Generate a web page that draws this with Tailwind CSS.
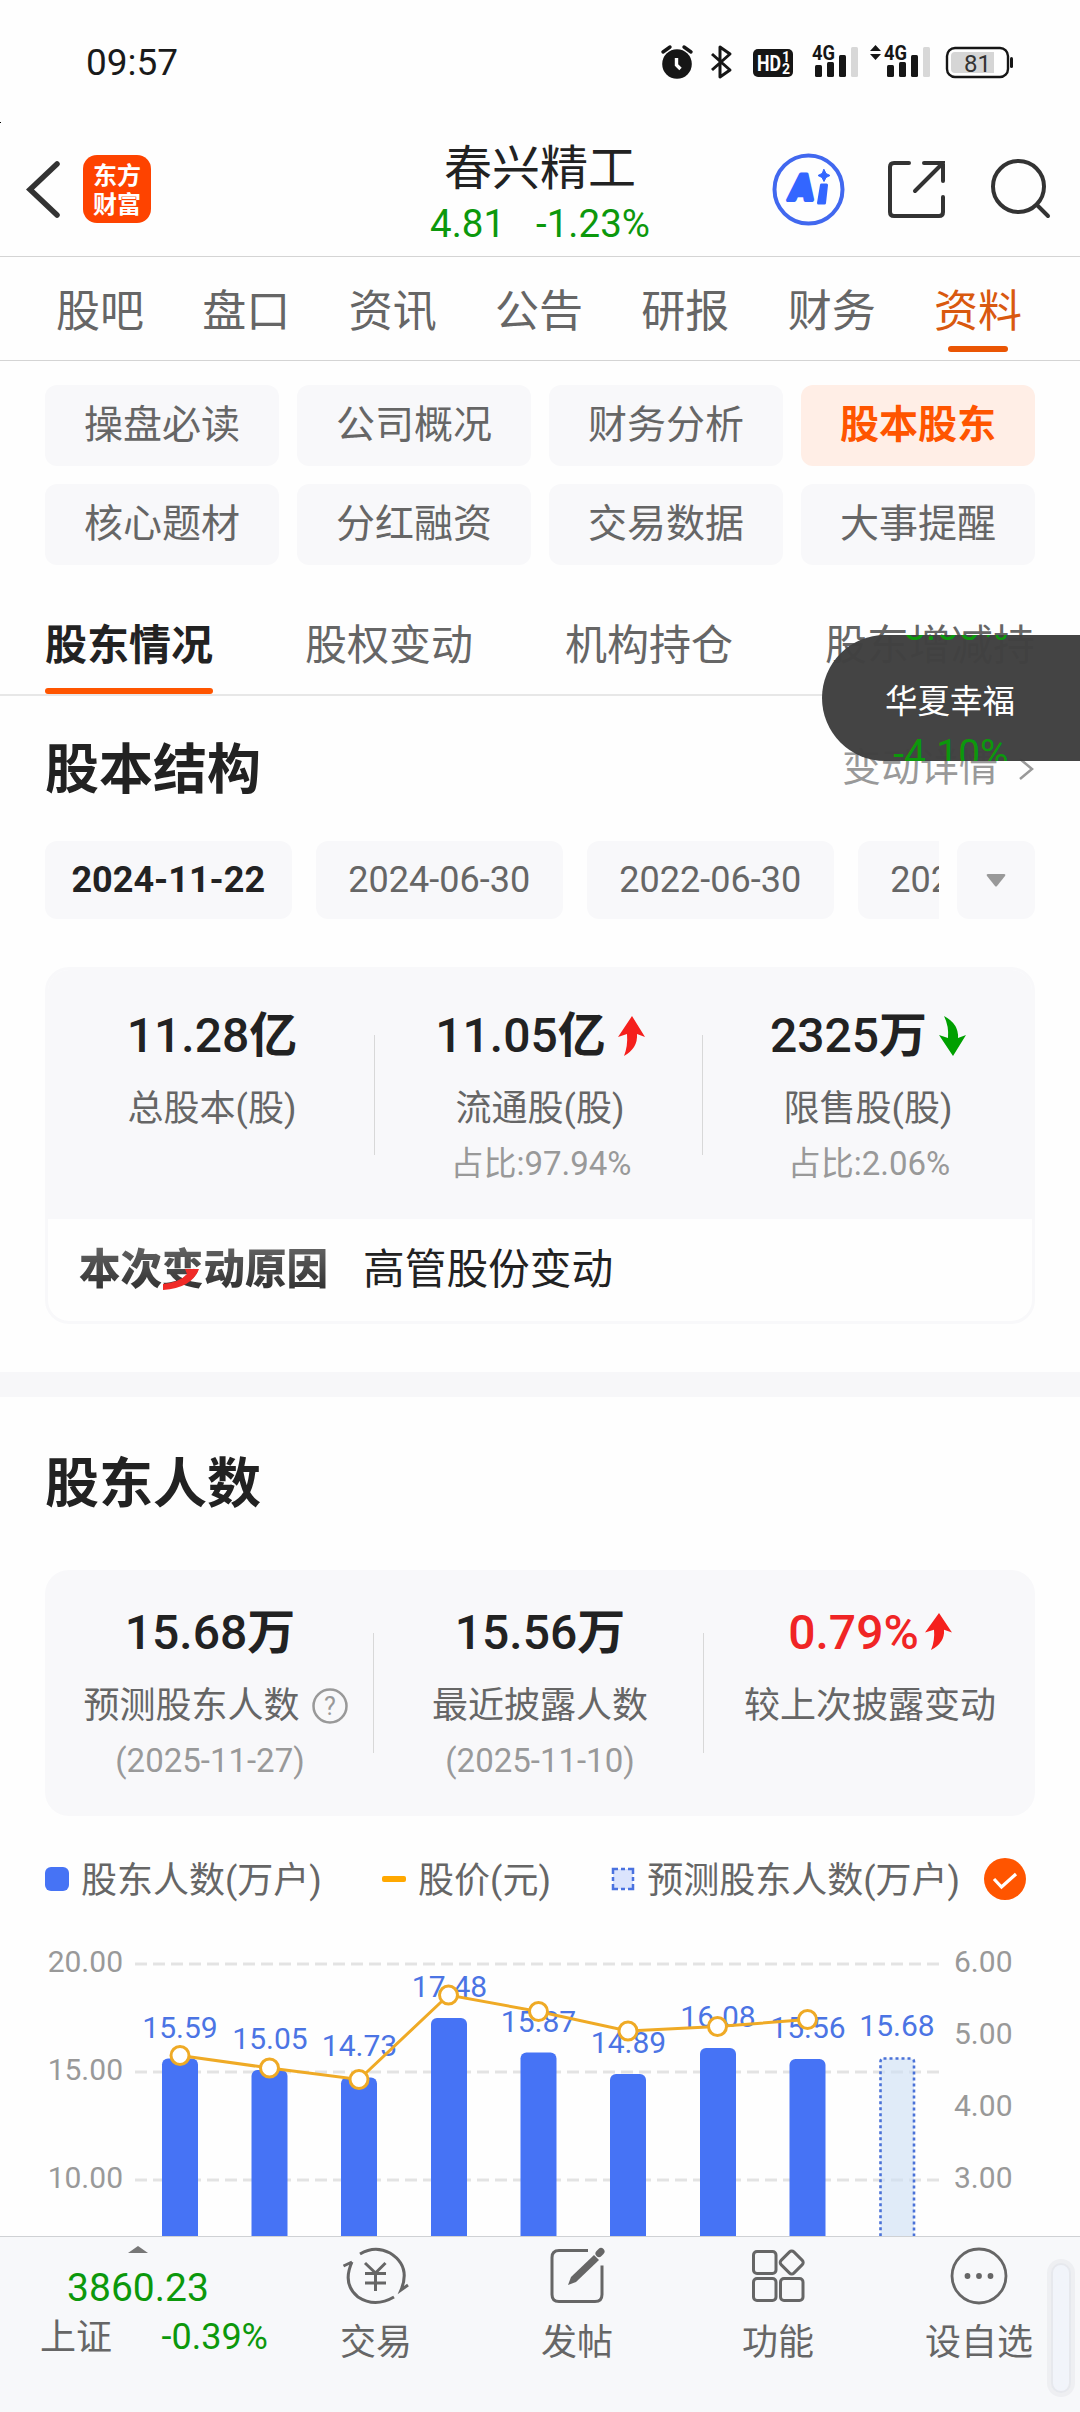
<!DOCTYPE html>
<html lang="zh-CN">
<head>
<meta charset="utf-8">
<title>春兴精工</title>
<script src="https://cdn.jsdelivr.net/npm/@tailwindcss/browser@4"></script>
</head>
<body class="bg-white font-[Roboto,'Noto_Sans_CJK_SC',sans-serif] text-[#666] leading-none">
<div class="relative w-[1080px] h-[2412px] overflow-hidden flex flex-col bg-[#fefefe]">

  <!-- status bar -->
  <div class="h-[124px] shrink-0 flex items-start justify-between pl-[86px] pr-[65px] pt-[40px]">
    <div class="text-[37px] leading-[46px] text-[#1a1a1a]">09:57</div>
    <svg class="w-[360px] h-[46px]" viewBox="655 40 360 46" fill="#161616">
      <circle cx="677" cy="64" r="14.8"/>
      <path d="M663 52l7-5M691 52l-7-5" stroke="#161616" stroke-width="3.4" stroke-linecap="round"/>
      <path d="M676.5 58v7l4 4" stroke="#fff" stroke-width="3.4" fill="none"/>
      <path d="M712 54l18 16-10 7V47l10 7-18 16" fill="none" stroke="#161616" stroke-width="3" stroke-linejoin="round"/>
      <rect x="753" y="49" width="40" height="28" rx="5"/>
      <text x="757" y="71" font-size="22" font-weight="700" fill="#fff" textLength="24" lengthAdjust="spacingAndGlyphs">HD</text>
      <text x="782" y="62" font-size="14" font-weight="700" fill="#fff">1</text>
      <text x="782" y="74" font-size="14" font-weight="700" fill="#fff">2</text>
      <text x="812" y="60" font-size="21" font-weight="700" textLength="23" lengthAdjust="spacingAndGlyphs">4G</text>
      <rect x="815" y="65" width="7" height="12" rx="1.5"/><rect x="827" y="62" width="7" height="15" rx="1.5"/><rect x="839" y="55" width="7" height="22" rx="1.5"/><rect x="851" y="47" width="7" height="30" rx="1.5" fill="#d8d8d8"/>
      <path d="M870 51l5.500-6 5.500 6zM870 54h11l-5.500 6z"/>
      <text x="884" y="60" font-size="21" font-weight="700" textLength="23" lengthAdjust="spacingAndGlyphs">4G</text>
      <rect x="887" y="65" width="7" height="12" rx="1.5"/><rect x="899" y="62" width="7" height="15" rx="1.5"/><rect x="911" y="55" width="7" height="22" rx="1.5"/><rect x="923" y="47" width="7" height="30" rx="1.5" fill="#d8d8d8"/>
      <rect x="947" y="48" width="61" height="29" rx="8" fill="#fff" stroke="#161616" stroke-width="2.4"/>
      <path d="M955 52h39v21h-39q-4 0-4-4v-13q0-4 4-4z" fill="#d6d6d6"/>
      <rect x="1010" y="57" width="3" height="11" rx="1.500"/>
      <text x="977.500" y="71.500" font-size="24" text-anchor="middle" fill="#333">81</text>
    </svg>
  </div>

  <!-- title bar -->
  <div class="h-[133px] shrink-0 grid grid-cols-[1fr_auto_1fr] border-b border-[#d4d4d4]">
    <div class="flex items-start pl-[26px] pt-[31px]">
      <svg class="w-[34px] h-[68px]" viewBox="26 155 34 68" fill="none" stroke="#333" stroke-width="5.500"><path d="M57 164L30 189.500l27 25.500" stroke-linecap="round"/></svg>
      <div class="ml-[23px] w-[68px] h-[68px] rounded-[14px] bg-[#fe4300] text-white font-bold text-[24px] leading-[29px] text-center pt-[7px]">东方<br>财富</div>
    </div>
    <div class="flex flex-col items-center">
      <div class="text-[48px] leading-[56px] mt-[17px] text-[#222]">春兴精工</div>
      <div class="text-[38.500px] leading-[44px] mt-[5px] text-[#0c980c] flex gap-[31px]"><span>4.81</span><span>-1.23%</span></div>
    </div>
    <div class="flex justify-end pr-[26px] pt-[28px]">
      <svg class="w-[284px] h-[76px]" viewBox="770 152 284 76" fill="none" stroke="#333" stroke-width="4" stroke-linecap="round">
        <circle cx="808.500" cy="189.500" r="34" stroke="#4168ef"/>
        <g fill="#3366ff" stroke="#3366ff" stroke-width="4" stroke-linejoin="round" font-weight="900">
          <text transform="translate(788 200) skewX(-8)" font-size="36" textLength="24" lengthAdjust="spacingAndGlyphs">A</text>
          <path d="M821.500 185h5l-2 18h-6z" stroke-width="3"/>
          <path d="M824 169.500l2 4 4 2-4 2-2 4-2-4-4-2 4-2z" stroke-width="1"/>
        </g>
        <path d="M909 163h-15q-4 0-4 4v45q0 4 4 4h45q4 0 4-4v-15M924 163h19v18M943 163l-28 28"/>
        <circle cx="1018.500" cy="186.500" r="25.500"/><path d="M1037 205l11 11"/>
      </svg>
    </div>
  </div>

  <!-- main tabs -->
  <div class="h-[104px] shrink-0 flex justify-between pl-[56px] pr-[58px] border-b border-[#d4d4d4] text-[44px]">
    <div class="pt-[33px]">股吧</div><div class="pt-[33px]">盘口</div><div class="pt-[33px]">资讯</div><div class="pt-[33px]">公告</div><div class="pt-[33px]">研报</div><div class="pt-[33px]">财务</div>
    <div class="pt-[33px] text-[#d9590f] flex flex-col items-center">资料<span class="mt-[12px] w-[60px] h-[6px] rounded-full bg-[#ea5504]"></span></div>
  </div>

  <!-- sub categories -->
  <div class="mt-[24px] mx-[45px] grid grid-cols-4 gap-[18px] text-[39px]">
    <div class="h-[81px] rounded-xl bg-[#f8f8fa] flex items-center justify-center">操盘必读</div>
    <div class="h-[81px] rounded-xl bg-[#f8f8fa] flex items-center justify-center">公司概况</div>
    <div class="h-[81px] rounded-xl bg-[#f8f8fa] flex items-center justify-center">财务分析</div>
    <div class="h-[81px] rounded-xl bg-[#ffeee6] text-[#ff5500] font-bold flex items-center justify-center">股本股东</div>
    <div class="h-[81px] rounded-xl bg-[#f8f8fa] flex items-center justify-center">核心题材</div>
    <div class="h-[81px] rounded-xl bg-[#f8f8fa] flex items-center justify-center">分红融资</div>
    <div class="h-[81px] rounded-xl bg-[#f8f8fa] flex items-center justify-center">交易数据</div>
    <div class="h-[81px] rounded-xl bg-[#f8f8fa] flex items-center justify-center">大事提醒</div>
  </div>

  <!-- section tabs -->
  <div class="h-[131px] shrink-0 flex gap-[92px] px-[45px] pt-[60px] border-b-2 border-[#e7e7e7] text-[42px] whitespace-nowrap">
    <div class="text-[#222] font-bold flex flex-col">股东情况<span class="mt-[21px] h-[6px] rounded-full bg-[#ff5500]"></span></div>
    <div>股权变动</div><div>机构持仓</div><div>股东增减持</div>
  </div>

  <!-- share structure -->
  <div class="h-[145px] shrink-0 px-[45px] flex items-center justify-between">
    <h2 class="text-[54px] font-bold text-[#222] pt-[4px]">股本结构</h2>
    <div class="flex items-center text-[39px] text-[#999]">变动详情<svg class="ml-[19px] w-[18px] h-[24px]" viewBox="0 0 18 24" fill="none" stroke="#999" stroke-width="2.500"><path d="M3 2l12 10L3 22"/></svg></div>
  </div>
  <div class="h-[78px] shrink-0 mx-[45px] flex gap-[18px] text-[36px]">
    <div class="flex-1 flex gap-[24.500px] overflow-hidden">
      <div class="w-[246.500px] shrink-0 rounded-xl bg-[#f8f8fa] text-[#222] font-bold flex items-center justify-center">2024-11-22</div>
      <div class="w-[246.500px] shrink-0 rounded-xl bg-[#f8f8fa] flex items-center justify-center">2024-06-30</div>
      <div class="w-[246.500px] shrink-0 rounded-xl bg-[#f8f8fa] flex items-center justify-center">2022-06-30</div>
      <div class="w-[246.500px] shrink-0 rounded-xl bg-[#f8f8fa] flex items-center justify-center">2021-12-31</div>
    </div>
    <div class="w-[78px] rounded-xl bg-[#f8f8fa] flex items-center justify-center"><svg class="w-[20px] h-[13px]" viewBox="0 0 20 13" fill="#999"><path d="M2 0h16q2 0 1 2l-8 10q-1 1-2 0L1 2Q0 0 2 0z"/></svg></div>
  </div>

  <div class="mt-[48px] mx-[45px] h-[357px] shrink-0 rounded-[24px] border-[3px] border-[#f8f8fa] overflow-hidden flex flex-col">
    <div class="h-[249px] bg-[#f8f8fa] grid grid-cols-3 text-center relative">
      <div class="pt-[42px]">
        <div class="text-[48px] font-medium text-[#222]">11.28<b>亿</b></div>
        <div class="mt-[31px] text-[36px]">总股本(股)</div>
      </div>
      <div class="pt-[42px]">
        <div class="text-[48px] font-medium text-[#222] flex justify-center items-center">11.05<b>亿</b><svg class="ml-[12px] w-[27px] h-[40px]" viewBox="0 0 27 40" fill="#f5201d"><path d="M14 0l13 21-8-3q1 14-13 22 4-10 3-22l-9 3z"/></svg></div>
        <div class="mt-[31px] text-[36px]">流通股(股)</div>
        <div class="mt-[20px] text-[33px] text-[#999] pl-[2px]">占比:97.94%</div>
      </div>
      <div class="pt-[42px]">
        <div class="text-[48px] font-medium text-[#222] flex justify-center items-center">2325<b>万</b><svg class="ml-[12px] w-[27px] h-[40px]" viewBox="0 0 27 40" fill="#00a000"><path d="M14 40L27 19l-8 3Q20 8 5 0q5 10 4 22l-9-3z"/></svg></div>
        <div class="mt-[31px] text-[36px]">限售股(股)</div>
        <div class="mt-[20px] text-[33px] text-[#999] pl-[2px]">占比:2.06%</div>
      </div>
      <div class="absolute left-[326px] top-[65px] w-px h-[120px] bg-[#d8d8d8]"></div>
      <div class="absolute left-[654px] top-[65px] w-px h-[120px] bg-[#d8d8d8]"></div>
    </div>
    <div class="flex-1 flex items-center pl-[31px] text-[42px] text-[#222]">
      <div class="relative font-black text-[41.500px] leading-[50px] bg-linear-to-b from-[#666] to-[#2c2c2c] bg-clip-text text-transparent">本次变动原因
        <svg class="absolute left-[84px] top-[24px] w-[36px] h-[21px]" viewBox="0 0 36 21" fill="#f02a27"><path d="M22 0h14Q29 19 0 21v-6Q17 13 24 5z"/></svg>
      </div>
      <div class="ml-[35px] text-[41.700px]">高管股份变动</div>
    </div>
  </div>
  <div class="mt-[48px] h-[25px] shrink-0 bg-[#f7f7f9]"></div>

  <!-- holder count -->
  <div class="h-[173px] shrink-0 px-[45px] flex items-center"><h2 class="text-[54px] font-bold text-[#222] pt-[3px]">股东人数</h2></div>
  <div class="relative mx-[45px] h-[246px] shrink-0 rounded-[24px] bg-[#f8f8fa] grid grid-cols-3 text-center">
    <div class="pt-[39px]">
      <div class="text-[48px] font-medium text-[#222]">15.68<b>万</b></div>
      <div class="mt-[31px] text-[36px] flex items-center justify-center pl-[11px]">预测股东人数<svg class="ml-[12px] w-[36px] h-[36px]" viewBox="0 0 36 36"><circle cx="18" cy="18" r="16.500" fill="none" stroke="#999" stroke-width="2.500"/><text x="18" y="27" font-size="25" text-anchor="middle" fill="#999">?</text></svg></div>
      <div class="mt-[20px] text-[33px] text-[#999]">(2025-11-27)</div>
    </div>
    <div class="pt-[39px]">
      <div class="text-[48px] font-medium text-[#222]">15.56<b>万</b></div>
      <div class="mt-[31px] text-[36px]">最近披露人数</div>
      <div class="mt-[20px] text-[33px] text-[#999]">(2025-11-10)</div>
    </div>
    <div class="pt-[39px]">
      <div class="text-[48px] font-medium text-[#f02525] flex items-center justify-center">0.79%<svg class="ml-[6px] mb-[3px] w-[27px] h-[37px]" viewBox="0 0 27 40" preserveAspectRatio="none" fill="#f5201d"><path d="M14 0l13 21-8-3q1 14-13 22 4-10 3-22l-9 3z"/></svg></div>
      <div class="mt-[31px] text-[36px]">较上次披露变动</div>
    </div>
    <div class="absolute left-[328px] top-[63px] w-px h-[120px] bg-[#d8d8d8]"></div>
    <div class="absolute left-[658px] top-[63px] w-px h-[120px] bg-[#d8d8d8]"></div>
  </div>

  <!-- legend -->
  <div class="h-[126px] shrink-0 pl-[45px] pr-[54px] flex items-center justify-between text-[36px]">
    <div class="flex items-center gap-[12px]"><span class="w-[24px] h-[24px] rounded-[6px] bg-[#4673f5]"></span><span class="pt-[4px]">股东人数(万户)</span></div>
    <div class="flex items-center gap-[12px]"><span class="w-[24px] h-[6px] rounded-[2px] bg-[#ffa800]"></span><span class="pt-[4px]">股价(元)</span></div>
    <div class="flex items-center gap-[12px]"><svg class="w-[24px] h-[24px]" viewBox="0 0 24 24"><path d="M2 2h20v20H2z" fill="#dbe4fd"/><path d="M2 7V2h5M17 2h5v5M22 17v5h-5M7 22H2v-5M10 2h4M10 22h4M2 10v4M22 10v4" fill="none" stroke="#4a72e0" stroke-width="2.500"/></svg><span class="pt-[4px]">预测股东人数(万户)</span>
      <svg class="ml-[12px] w-[42px] h-[42px]" viewBox="0 0 42 42"><circle cx="21" cy="21" r="21" fill="#ff5500"/><path d="M10 21l7.500 8L32 16" fill="none" stroke="#fff" stroke-width="3.200"/></svg></div>
  </div>

  <!-- chart -->
  <svg class="w-[1080px] h-[294px] shrink-0" viewBox="0 1942 1080 294" font-size="30">
    <path d="M135 1964H940M135 2072H940M135 2180H940" stroke="#e3e3e3" stroke-width="3" stroke-dasharray="12 6"/>
    <g fill="#999" text-anchor="end"><text x="123" y="1972">20.00</text><text x="123" y="2080">15.00</text><text x="123" y="2188">10.00</text></g>
    <g fill="#999"><text x="954" y="1972">6.00</text><text x="954" y="2044">5.00</text><text x="954" y="2116">4.00</text><text x="954" y="2188">3.00</text></g>
    <g fill="#4673f5">
      <rect x="162" y="2058.500" width="36" height="200" rx="6"/><rect x="251.500" y="2070" width="36" height="200" rx="6"/><rect x="341" y="2077.500" width="36" height="200" rx="6"/>
      <rect x="431" y="2018" width="36" height="240" rx="6"/><rect x="520.500" y="2052.500" width="36" height="200" rx="6"/><rect x="610" y="2074" width="36" height="200" rx="6"/>
      <rect x="700" y="2048" width="36" height="200" rx="6"/><rect x="789.500" y="2059" width="36" height="200" rx="6"/>
    </g>
    <rect x="880.500" y="2058.500" width="33.500" height="200" rx="3" fill="#cfe0f5" fill-opacity=".65" stroke="#4a72d8" stroke-width="2.600" stroke-dasharray="3 3"/>
    <g fill="#4b74e4" text-anchor="middle">
      <text x="180" y="2038">15.59</text><text x="270" y="2049">15.05</text><text x="359.500" y="2056">14.73</text><text x="449.500" y="1997">17.48</text><text x="538.500" y="2032">15.87</text><text x="628.500" y="2053">14.89</text><text x="718" y="2027">16.08</text><text x="808" y="2038">15.56</text><text x="897" y="2036">15.68</text>
    </g>
    <g fill="#fff" stroke="#efaa25" stroke-width="3">
      <polyline fill="none" points="180,2055.500 269.500,2068 359,2079.500 448.500,1995 538.500,2011.500 628,2031 717.500,2026.500 807.500,2019.500"/>
      <circle cx="180" cy="2055.500" r="9"/><circle cx="269.500" cy="2068" r="9"/><circle cx="359" cy="2079.500" r="9"/><circle cx="448.500" cy="1995" r="9"/><circle cx="538.500" cy="2011.500" r="9"/><circle cx="628" cy="2031" r="9"/><circle cx="717.500" cy="2026.500" r="9"/><circle cx="807.500" cy="2019.500" r="9"/>
    </g>
  </svg>

  <!-- bottom bar -->
  <div class="relative h-[176px] shrink-0 border-t border-[#cfd1d4] bg-[#f7f8fa] flex text-[36px]">
    <div class="w-[276px] flex flex-col items-center pt-[9px] text-[#0c980c]">
      <svg class="w-[20px] h-[7px]" viewBox="0 0 20 7" fill="#777"><path d="M0 7l10-7 10 7z"/></svg>
      <div class="mt-[16px] text-[39px]">3860.23</div>
      <div class="mt-[11px] w-full flex justify-between pl-[40px] pr-[8px]"><span class="text-[#666] pt-[1px]">上证</span><span>-0.39%</span></div>
    </div>
    <div class="w-[200px] flex flex-col items-center pt-[7px]">
      <svg class="w-[68px] h-[64px]" viewBox="342 2244 68 64" fill="none" stroke="#666" stroke-width="3">
        <path d="M360 2254Q375 2245 390 2253Q411 2266 401 2290L408 2285M352 2262L343.500 2266M352 2262Q342 2284 358 2297Q375 2308 394 2297M365 2263l10.500 10 10-10M365 2273.500h21M365 2283h21M375.500 2273v18"/>
      </svg>
      <div class="mt-[17px]">交易</div>
    </div>
    <div class="w-[202px] flex flex-col items-center pt-[7px]">
      <svg class="w-[64px] h-[64px]" viewBox="545 2244 64 64" fill="none" stroke="#666" stroke-width="3">
        <path d="M588 2250.500h-29q-7 0-7 7v37q0 7 7 7h36q7 0 7-7v-29"/>
        <path d="M568 2285l3-8 23-22 5 5-23 22z" fill="#666" stroke="none"/><path d="M599 2253.500l2-2" stroke-width="7" stroke-linecap="round"/>
      </svg>
      <div class="mt-[17px]">发帖</div>
    </div>
    <div class="w-[200px] flex flex-col items-center pt-[7px]">
      <svg class="w-[64px] h-[64px]" viewBox="746 2244 64 64" fill="none" stroke="#666" stroke-width="3">
        <rect x="753.500" y="2251.500" width="22.500" height="22" rx="3.500"/><rect x="753.500" y="2278.500" width="22.500" height="22" rx="3.500"/><rect x="780.500" y="2278.500" width="22.500" height="22" rx="3.500"/>
        <rect x="782.700" y="2253.500" width="18" height="18" rx="3" transform="rotate(45 791.700 2262.500)"/>
      </svg>
      <div class="mt-[17px]">功能</div>
    </div>
    <div class="w-[202px] flex flex-col items-center pt-[7px]">
      <svg class="w-[64px] h-[64px]" viewBox="0 0 64 64" fill="#666"><circle cx="32" cy="32" r="27" fill="none" stroke="#666" stroke-width="2.800"/><circle cx="20.500" cy="32" r="2.900"/><circle cx="32" cy="32" r="2.900"/><circle cx="43.500" cy="32" r="2.900"/></svg>
      <div class="mt-[17px]">设自选</div>
    </div>
    <div class="absolute left-[1051px] top-[26px] w-[20px] h-[130px] rounded-full bg-[#f1f4fa] border-2 border-[#e6e8ed] shadow-[0_0_0_4px_#eeeff2]"></div>
  </div>

  <!-- floating ticker -->
  <div class="absolute left-[822px] top-[635px] w-[258px] h-[126px] rounded-l-full bg-[#404040]/98 overflow-hidden text-center">
    <div class="absolute inset-x-0 top-[-27px] text-[39px] text-[#0c980c]">-3.60%</div>
    <div class="absolute left-0 right-[2px] top-[51px] text-[32.500px] text-white">华夏幸福</div>
    <div class="absolute inset-x-0 top-[100px] text-[39px] text-[#0c980c]">-4.10%</div>
  </div>
  <div class="absolute left-0 top-[122px] w-px h-px bg-black"></div>
</div>
</body>
</html>
